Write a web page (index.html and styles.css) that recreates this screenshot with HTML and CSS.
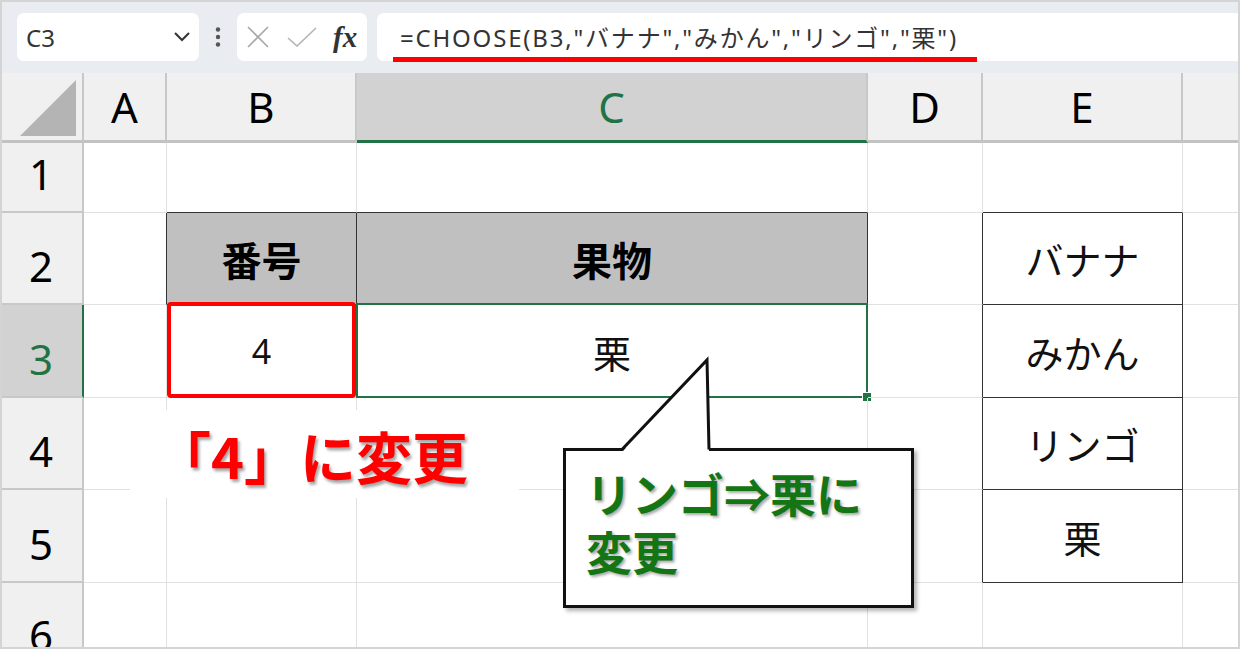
FILE: index.html
```html
<!DOCTYPE html>
<html lang="ja">
<head>
  <meta charset="UTF-8">
  <title>CHOOSE</title>
  <link rel="stylesheet" href="styles.css">
</head>
<body>
<div class="page">

  <div class="topbar">
    <div class="namebox">
      <span>C3</span>
      <svg width="16" height="10" viewBox="0 0 16 10"><polyline points="1,1 8,8 15,1" fill="none" stroke="#333" stroke-width="2"/></svg>
    </div>
    <div class="dots">
      <svg width="6" height="20" viewBox="0 0 6 20"><circle cx="3" cy="2.5" r="2.2" fill="#555"/><circle cx="3" cy="10" r="2.2" fill="#555"/><circle cx="3" cy="17.5" r="2.2" fill="#555"/></svg>
    </div>
    <div class="fxbox">
      <svg width="22" height="22" viewBox="0 0 22 22"><path d="M1 1 L21 21 M21 1 L1 21" stroke="#a8a8a8" stroke-width="1.6"/></svg>
      <svg class="check" width="30" height="20" viewBox="0 0 30 20"><polyline points="1,11 10,19 29,1" fill="none" stroke="#b4b4b4" stroke-width="1.6"/></svg>
      <span class="fx">fx</span>
    </div>
    <div class="formula">
      <span class="ftext">=CHOOSE(B3,"バナナ","みかん","リンゴ","栗")</span>
    </div>
  </div>

  <div class="sheet">
    <!-- column headers -->
    <div class="c hd corner"><svg width="60" height="60" viewBox="0 0 60 60"><polygon points="2,58 58,2 58,58" fill="#b4b4b4"/></svg></div>
    <div class="c hd">A</div>
    <div class="c hd">B</div>
    <div class="c hd on-col">C</div>
    <div class="c hd">D</div>
    <div class="c hd">E</div>
    <div class="c hd"></div>

    <!-- row 1 -->
    <div class="c rh">1</div>
    <div class="c"></div>
    <div class="c dk-b"></div>
    <div class="c dk-b"></div>
    <div class="c"></div>
    <div class="c dk-b"></div>
    <div class="c"></div>

    <!-- row 2 -->
    <div class="c rh">2</div>
    <div class="c dk-r"></div>
    <div class="c th dk-r dk-b">番号</div>
    <div class="c th dk-r dk-b">果物</div>
    <div class="c dk-r"></div>
    <div class="c dk-r dk-b">バナナ</div>
    <div class="c"></div>

    <!-- row 3 -->
    <div class="c rh on-row">3</div>
    <div class="c"></div>
    <div class="c num picked">4</div>
    <div class="c active">栗</div>
    <div class="c dk-r"></div>
    <div class="c dk-r dk-b">みかん</div>
    <div class="c"></div>

    <!-- row 4 -->
    <div class="c rh">4</div>
    <div class="c"></div>
    <div class="c"></div>
    <div class="c"></div>
    <div class="c dk-r"></div>
    <div class="c dk-r dk-b">リンゴ</div>
    <div class="c"></div>

    <!-- row 5 -->
    <div class="c rh">5</div>
    <div class="c"></div>
    <div class="c"></div>
    <div class="c"></div>
    <div class="c dk-r"></div>
    <div class="c dk-r dk-b">栗</div>
    <div class="c"></div>

    <!-- row 6 (cut off) -->
    <div class="c rh last">6</div>
    <div class="c"></div>
    <div class="c"></div>
    <div class="c"></div>
    <div class="c"></div>
    <div class="c"></div>
    <div class="c"></div>
  </div>

  <div class="note">「4」に変更</div>

  <div class="callout">
    <svg class="tail" width="110" height="100" viewBox="0 0 110 100">
      <polygon points="9,96 94,4 96,96" fill="#fff"/>
      <polyline points="9,93.5 94,4 96,93.5" fill="none" stroke="#111" stroke-width="3"/>
    </svg>
    <div class="line">リンゴ⇒栗に</div>
    <div class="line">変更</div>
  </div>

</div>
</body>
</html>
```

FILE: styles.css
```css
* {
  box-sizing: border-box;
}
body {
  margin: 0;
  font-family: "Noto Sans", "Noto Sans CJK JP", sans-serif;
}
.page {
  position: relative;
  width: 1240px;
  height: 649px;
  overflow: hidden;
  background: #fff;
}
/* thin frame round the screenshot */
.page::after {
  content: "";
  position: absolute;
  inset: 0;
  border: 2px solid #d4d4d4;
  pointer-events: none;
}

/* formula bar */
.topbar {
  height: 73px;
  background: #e9ecf0;
  display: flex;
  align-items: flex-start;
  padding: 13px 0 0 17px;
}
.namebox {
  width: 182px;
  height: 48px;
  background: #fff;
  border-radius: 7px;
  display: flex;
  align-items: center;
  justify-content: space-between;
  padding: 0 9px 0 9px;
  font-size: 24px;
  color: #333;
}
.dots {
  width: 38px;
  height: 48px;
  display: flex;
  align-items: center;
  justify-content: center;
}
.fxbox {
  width: 130px;
  height: 48px;
  background: #fff;
  border-radius: 7px;
  display: flex;
  align-items: center;
  padding-left: 10px;
}
.fxbox .check {
  margin-left: 18px;
}
.fx {
  margin-left: 16px;
  font-family: "Liberation Serif", serif;
  font-style: italic;
  font-weight: bold;
  font-size: 29px;
  color: #333;
}
.formula {
  flex: 1;
  height: 48px;
  margin-left: 10px;
  background: #fff;
  border-radius: 7px 0 0 7px;
}
.ftext {
  display: inline-block;
  margin-left: 16px;
  padding: 5px 19px 0 7px;
  line-height: 39px;
  border-bottom: 5px solid #ff0000;
  font-size: 24px;
  letter-spacing: 1.8px;
  color: #333;
  white-space: nowrap;
}

/* sheet grid */
.sheet {
  display: grid;
  grid-template-columns: 84px 83px 190px 511px 115px 200px 57px;
  grid-template-rows: 70px 70px 92px 93px 92px 93px 66px;
}
.c {
  position: relative;
  display: flex;
  align-items: center;
  justify-content: center;
  border-right: 1px solid #e1e1e1;
  border-bottom: 1px solid #e1e1e1;
  font-family: "Noto Sans CJK JP", sans-serif;
  font-size: 38px;
  color: #111;
}
.hd {
  background: #f0f0f0;
  border-right: 2px solid #c8c8c8;
  border-bottom: 3px solid #c2c2c2;
  font-family: "Noto Sans", sans-serif;
  font-size: 42px;
  line-height: 1;
  color: #000;
}
.corner {
  align-items: flex-end;
  justify-content: flex-end;
  padding: 0 4px 2px 0;
}
.rh {
  background: #f0f0f0;
  border-right: 2px solid #c8c8c8;
  border-bottom: 2px solid #c8c8c8;
  align-items: flex-end;
  padding-bottom: 16px;
  font-family: "Noto Sans", sans-serif;
  font-size: 42px;
  line-height: 1;
  color: #000;
}
.rh.last {
  align-items: flex-start;
  padding: 31px 0 0;
}
.on-col {
  background: #d2d2d2;
  color: #217346;
  border-bottom-color: #217346;
}
.on-row {
  background: #d2d2d2;
  color: #217346;
  border-right-color: #217346;
}
.dk-r {
  border-right-color: #333;
}
.dk-b {
  border-bottom-color: #333;
}
.th {
  background: #c0c0c0;
  font-weight: bold;
  font-size: 40px;
  color: #000;
}
.num {
  font-family: "Noto Sans", sans-serif;
  font-size: 34px;
}
/* B3: red frame */
.picked::before {
  content: "";
  position: absolute;
  top: -3px;
  left: 0;
  right: 0;
  bottom: -1px;
  border: 4px solid #ff0000;
  border-radius: 4px;
}
/* C3: active cell */
.active::before {
  content: "";
  position: absolute;
  top: -2px;
  left: -1px;
  right: -1px;
  bottom: -1px;
  border: 2px solid #217346;
}
.active::after {
  content: "";
  position: absolute;
  right: -5px;
  bottom: -5px;
  width: 8px;
  height: 8px;
  background: #217346;
  border: 1px solid #fff;
}

/* annotations */
.note {
  position: absolute;
  left: 130px;
  top: 410px;
  width: 389px;
  height: 88px;
  background: #fff;
  display: flex;
  align-items: center;
  padding-left: 25px;
  font-family: "Noto Sans CJK JP", sans-serif;
  font-weight: bold;
  font-size: 56px;
  color: #ff0000;
  text-shadow: 2px 3px 3px rgba(0, 0, 0, 0.35);
  white-space: nowrap;
}
.callout {
  position: absolute;
  left: 563px;
  top: 448px;
  width: 351px;
  height: 160px;
  border: 3px solid #111;
  background: #fff;
  box-shadow: 3px 3px 4px rgba(0, 0, 0, 0.3);
  padding: 16px 0 0 20px;
  font-family: "Noto Sans CJK JP", sans-serif;
  font-weight: bold;
  font-size: 46px;
  color: #137513;
  text-shadow: 2px 2px 3px rgba(0, 0, 0, 0.35);
  white-space: nowrap;
}
.callout .line {
  height: 58px;
  line-height: 50px;
}
.tail {
  position: absolute;
  left: 47px;
  top: -95px;
}
```
